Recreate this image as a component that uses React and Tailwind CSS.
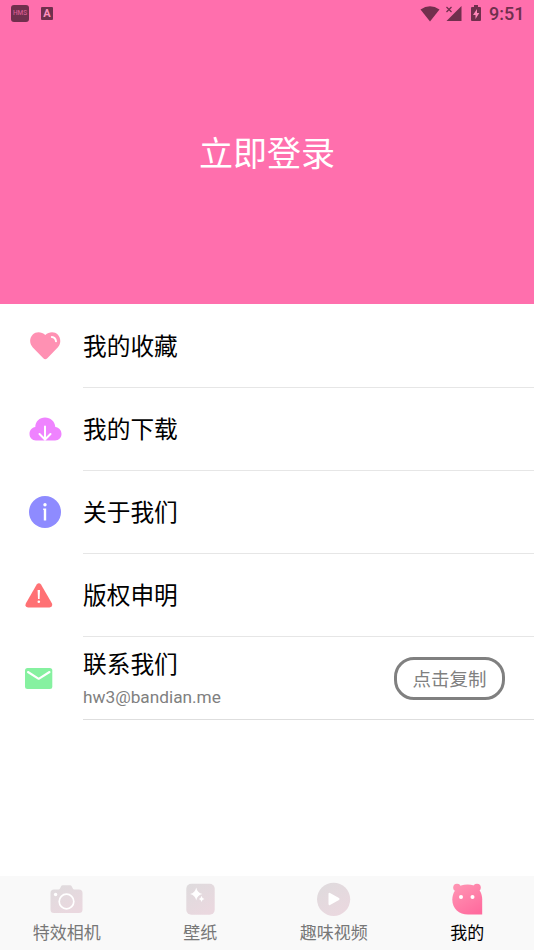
import React from 'react';

const ink = '#702f4d';

function StatusBar() {
  return (
    <div className="flex h-[27px] items-center justify-between pl-[11px] pr-[10px] text-[#702f4d]">
      <div className="flex items-center gap-3">
        <div className="flex h-[17px] w-[18px] items-center justify-center rounded-[3px] bg-[#702f4d] font-['Roboto',sans-serif] text-[6.5px] font-medium leading-none text-[#d45b90]">HMS</div>
        <div className="flex h-[13px] w-3 items-center justify-center rounded-[1px] bg-[#702f4d] font-['Roboto',sans-serif] text-[11px] font-bold leading-none text-[#ff8fbd]">A</div>
      </div>
      <div className="flex items-center">
        <svg width="64" height="20" viewBox="0 0 64 20" fill={ink}>
          <path d="M0.500 5.500Q10 -1 19.500 5.500L10 17.500Z" />
          <path d="M41.500 2v15H26.500Z" />
          <path d="M26 2.500l6 6M32 2.500l-6 6" stroke="#ff6fad" strokeWidth="3" />
          <path d="M26.500 3l5 5M31.500 3l-5 5" stroke={ink} strokeWidth="1.300" />
          <path d="M54 1h4v2h2q1 0 1 1v12q0 1-1 1h-8q-1 0-1-1V4q0-1 1-1h2Z" />
          <path d="M57 5l-4 6h2.500v4l3.800-6h-2.300Z" fill="#ff86b8" />
        </svg>
        <span className="ml-[5px] w-[35px] whitespace-nowrap font-['Roboto',sans-serif] text-[18px] font-medium leading-none">9:51</span>
      </div>
    </div>
  );
}

function HeartIcon() {
  return (
    <svg width="32" height="28" viewBox="0 0 32 28">
      <path d="M16.300 3C12.500-.5 7-.5 3.800 2.500C.3 6 .2 11.500 3.800 15.500L14.300 26.300Q16.300 28 18.300 26.300L28.700 15.500C32.300 11.500 32 6 28.700 2.500C25.700-.5 20-.5 16.300 3Z" fill="#ff91b3" />
      <path d="M22.800 5Q26.500 5.500 27 9.300" fill="none" stroke="#fff" strokeWidth="1.900" strokeLinecap="round" />
    </svg>
  );
}

function CloudIcon() {
  return (
    <svg width="33" height="24" viewBox="0 0 33 24">
      <path d="M7 23.500C3 23.500.5 20.500.5 17C.5 13 3 10.500 6.300 10C6.300 4.500 10.500.5 16 .5S26 4.500 26.300 10C30 10.500 32.500 13.200 32.500 17C32.500 20.500 30 23.500 26 23.500Z" fill="#ef83ff" />
      <path d="M16 9.500V22M10.500 17L16 22.500L21.500 17" fill="none" stroke="#fff" strokeWidth="2" strokeLinecap="round" />
    </svg>
  );
}

function InfoIcon() {
  return (
    <svg width="32" height="32" viewBox="0 0 32 32">
      <circle cx="16" cy="16" r="16" fill="#8e8bff" />
      <circle cx="16" cy="8.700" r="1.700" fill="#fff" />
      <path d="M14.200 12.600h3v12h-2.400V14h-.6Z" fill="#fff" />
    </svg>
  );
}

function WarningIcon() {
  return (
    <svg width="28" height="25" viewBox="0 0 28 25">
      <path d="M11.700 1.600Q14-1.100 16 1.600L27 20.500Q28 24 24.500 24.500H3Q-.5 24 .8 20.500Z" fill="#ff7174" />
      <path d="M12.600 7h2.400l-.4 9h-1.600Z" fill="#fff" />
      <circle cx="13.800" cy="18.800" r="1.300" fill="#fff" />
    </svg>
  );
}

function MailIcon() {
  return (
    <svg width="28" height="21" viewBox="0 0 28 21">
      <rect x="0" y="0" width="27.300" height="21" rx="2.500" fill="#86f1a0" />
      <path d="M3 4L13.700 10.800L24.500 4" fill="none" stroke="#fff" strokeWidth="2.100" strokeLinecap="round" strokeLinejoin="round" />
    </svg>
  );
}

function MutedGradient({ id }) {
  return (
    <defs>
      <linearGradient id={id} x1="0" y1="0" x2="0.600" y2="1">
        <stop offset="0" stopColor="#dedbdd" />
        <stop offset="1" stopColor="#ead8df" />
      </linearGradient>
    </defs>
  );
}

function CameraIcon() {
  return (
    <svg width="33" height="34" viewBox="0 0 33 34">
      <MutedGradient id="camera" />
      <path d="M4 7.500H8.500Q9.500 7.500 10 6.500L11 4.500Q11.500 3.300 12.700 3.300H20Q21.200 3.300 21.800 4.500L22.800 6.500Q23.300 7.500 24.300 7.500H29Q32.500 7.500 32.500 11V27.500Q32.500 31 29 31H4Q.5 31 .5 27.500V11Q.5 7.500 4 7.500Z" fill="url(#camera)" />
      <circle cx="16.500" cy="19.500" r="7.300" fill="none" stroke="#fff" strokeWidth="1.700" />
      <circle cx="5.600" cy="12.500" r="1.700" fill="#fff" />
    </svg>
  );
}

function WallpaperIcon() {
  return (
    <svg width="29" height="34" viewBox="0 0 29 34">
      <MutedGradient id="wallpaper" />
      <rect x="0.300" y="1.800" width="28.400" height="31" rx="5" fill="url(#wallpaper)" />
      <path d="M10.200 5.500Q11.200 10.800 16.500 12Q11.200 13.200 10.200 18.500Q9.200 13.200 4 12Q9.200 10.800 10.200 5.500ZM15.500 13.700Q16 16.500 18.500 17Q16 17.500 15.500 20Q15 17.500 12.800 17Q15 16.500 15.500 13.700Z" fill="#fff" />
    </svg>
  );
}

function PlayIcon() {
  return (
    <svg width="34" height="34" viewBox="0 0 34 34">
      <MutedGradient id="play" />
      <circle cx="16.600" cy="17.300" r="16.600" fill="url(#play)" />
      <path d="M11.500 12Q11.500 10.300 13 11.100L22 16Q23.300 17 22 18L13 22.900Q11.500 23.700 11.500 22Z" fill="#fff" />
    </svg>
  );
}

function BearIcon() {
  return (
    <svg width="31" height="34" viewBox="0 0 31 34">
      <defs>
        <linearGradient id="bear" gradientUnits="userSpaceOnUse" x1="6" y1="2" x2="24" y2="32">
          <stop offset="0" stopColor="#ff94b3" />
          <stop offset="1" stopColor="#ff6b9e" />
        </linearGradient>
      </defs>
      <g fill="url(#bear)">
        <circle cx="5" cy="5.500" r="3.800" />
        <circle cx="25" cy="5.500" r="3.800" />
        <path d="M9 3.400Q12 2.500 15.500 2.500Q19 2.500 22 3.400C27 5.500 30.200 11 30.200 17.500V32.500H16C7 32.500.3 26.500.3 17.500C.3 11 4 5.500 9 3.400Z" />
      </g>
      <circle cx="9" cy="15" r="2" fill="#fff" />
      <circle cx="20.500" cy="15" r="2" fill="#fff" />
    </svg>
  );
}

const rows = [
  { label: '我的收藏', Icon: HeartIcon, pad: 'pl-[29px] pb-[2px]' },
  { label: '我的下载', Icon: CloudIcon, pad: 'pl-[29px] pb-px' },
  { label: '关于我们', Icon: InfoIcon, pad: 'pl-[29px] pb-[2px]' },
  { label: '版权申明', Icon: WarningIcon, pad: 'pl-[25px]' },
];

const tabs = [
  { label: '特效相机', Icon: CameraIcon },
  { label: '壁纸', Icon: WallpaperIcon },
  { label: '趣味视频', Icon: PlayIcon },
  { label: '我的', Icon: BearIcon, active: true },
];

export default function App() {
  return (
    <div className="flex h-[950px] w-[534px] flex-col overflow-hidden bg-white font-['Noto_Sans_CJK_SC',sans-serif] text-black">
      <header className="h-[304px] shrink-0 bg-[#ff6fad]">
        <StatusBar />
        <h1 className="pt-[100px] text-center text-[34px] font-normal leading-[50px] text-white">立即登录</h1>
      </header>

      <main className="flex-1 pt-px">
        {rows.map(({ label, Icon, pad }) => (
          <div key={label} className="flex h-[83px]">
            <div className={`flex w-[83px] items-center ${pad}`}>
              <Icon />
            </div>
            <div className="flex flex-1 items-center border-b border-[#e6e6e6] pb-[2px] text-[23.7px] leading-8">{label}</div>
          </div>
        ))}
        <div className="flex h-[83px]">
          <div className="flex w-[83px] items-center pl-[25px]">
            <MailIcon />
          </div>
          <div className="flex flex-1 items-center justify-between border-b border-[#dedede] pr-[29px]">
            <div className="pb-[2px]">
              <div className="text-[23.7px] leading-8">联系我们</div>
              <div className="mt-[8px] font-['Roboto',sans-serif] text-[17.25px] leading-5 text-[#808080]">hw3@bandian.me</div>
            </div>
            <button className="h-[43px] w-[111px] rounded-[20px] border-3 border-[#808080] text-[18.5px] leading-none text-[#808080]">点击复制</button>
          </div>
        </div>
      </main>

      <nav className="grid h-[74px] shrink-0 grid-cols-4 bg-[#f9f9f9]">
        {tabs.map(({ label, Icon, active }) => (
          <div key={label} className={`flex flex-col items-center pt-[6px] text-[17px] leading-6 ${active ? 'text-black' : 'text-[#777777]'}`}>
            <Icon />
            <span className="mt-[4px]">{label}</span>
          </div>
        ))}
      </nav>
    </div>
  );
}
